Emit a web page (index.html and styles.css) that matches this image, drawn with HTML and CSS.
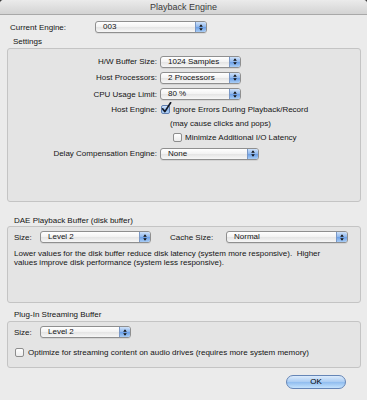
FILE: index.html
```html
<!DOCTYPE html>
<html>
<head>
<meta charset="utf-8">
<link rel="stylesheet" href="styles.css">
</head>
<body>
<div class="window">
  <div class="titlebar">Playback Engine</div>

  <div class="engine-row">
    <span class="engine-label">Current Engine:</span>
    <div class="popup w-engine"><span class="popup-text">003</span><span class="cap"><svg width="4" height="7" viewBox="0 0 4 7"><path d="M2 0.3 L3.8 2.7 H0.2 Z M2 6.7 L3.8 4.3 H0.2 Z" fill="#111"/></svg></span></div>
  </div>

  <div class="legend legend-settings">Settings</div>
  <div class="group settings">
    <div class="form">
      <div class="lbl">H/W Buffer Size:</div>
      <div class="ctl"><div class="popup w-hw"><span class="popup-text">1024 Samples</span><span class="cap"><svg width="4" height="7" viewBox="0 0 4 7"><path d="M2 0.3 L3.8 2.7 H0.2 Z M2 6.7 L3.8 4.3 H0.2 Z" fill="#111"/></svg></span></div></div>

      <div class="lbl">Host Processors:</div>
      <div class="ctl"><div class="popup w-hw"><span class="popup-text">2 Processors</span><span class="cap"><svg width="4" height="7" viewBox="0 0 4 7"><path d="M2 0.3 L3.8 2.7 H0.2 Z M2 6.7 L3.8 4.3 H0.2 Z" fill="#111"/></svg></span></div></div>

      <div class="lbl">CPU Usage Limit:</div>
      <div class="ctl"><div class="popup w-hw"><span class="popup-text">80 %</span><span class="cap"><svg width="4" height="7" viewBox="0 0 4 7"><path d="M2 0.3 L3.8 2.7 H0.2 Z M2 6.7 L3.8 4.3 H0.2 Z" fill="#111"/></svg></span></div></div>

      <div class="lbl">Host Engine:</div>
      <div class="ctl check-line host"><span class="checkbox checked"><svg width="11" height="12" viewBox="0 0 11 12"><path d="M1.6 6.8 L3.9 9.6 L9.6 0.8" fill="none" stroke="#141a26" stroke-width="1.7" stroke-linecap="round" stroke-linejoin="round"/></svg></span><span>Ignore Errors During Playback/Record</span></div>

      <div class="lbl"></div>
      <div class="ctl note">(may cause clicks and pops)</div>

      <div class="lbl"></div>
      <div class="ctl check-line minimize"><span class="checkbox"></span><span>Minimize Additional I/O Latency</span></div>

      <div class="lbl">Delay Compensation Engine:</div>
      <div class="ctl"><div class="popup w-delay"><span class="popup-text">None</span><span class="cap"><svg width="4" height="7" viewBox="0 0 4 7"><path d="M2 0.3 L3.8 2.7 H0.2 Z M2 6.7 L3.8 4.3 H0.2 Z" fill="#111"/></svg></span></div></div>
    </div>
  </div>

  <div class="legend legend-dae">DAE Playback Buffer (disk buffer)</div>
  <div class="group dae">
    <div class="row">
      <span class="size-label">Size:</span>
      <div class="popup w-level"><span class="popup-text">Level 2</span><span class="cap"><svg width="4" height="7" viewBox="0 0 4 7"><path d="M2 0.3 L3.8 2.7 H0.2 Z M2 6.7 L3.8 4.3 H0.2 Z" fill="#111"/></svg></span></div>
      <span class="cache-label">Cache Size:</span>
      <div class="popup w-cache"><span class="popup-text">Normal</span><span class="cap"><svg width="4" height="7" viewBox="0 0 4 7"><path d="M2 0.3 L3.8 2.7 H0.2 Z M2 6.7 L3.8 4.3 H0.2 Z" fill="#111"/></svg></span></div>
    </div>
    <p class="desc">Lower values for the disk buffer reduce disk latency (system more responsive).&nbsp; Higher<br>values improve disk performance (system less responsive).</p>
  </div>

  <div class="legend legend-plugin">Plug-In Streaming Buffer</div>
  <div class="group plugin">
    <div class="row">
      <span class="size-label">Size:</span>
      <div class="popup w-level2"><span class="popup-text">Level 2</span><span class="cap"><svg width="4" height="7" viewBox="0 0 4 7"><path d="M2 0.3 L3.8 2.7 H0.2 Z M2 6.7 L3.8 4.3 H0.2 Z" fill="#111"/></svg></span></div>
    </div>
    <div class="row check-line optimize"><span class="checkbox"></span><span>Optimize for streaming content on audio drives (requires more system memory)</span></div>
  </div>

  <div class="footer">
    <div class="ok-button">OK</div>
  </div>
</div>
</body>
</html>
```

FILE: styles.css
```css
* { box-sizing: border-box; margin: 0; padding: 0; }

html, body {
  width: 367px;
  height: 400px;
  overflow: hidden;
  background: #3c3c3c;
}

body {
  font-family: "Liberation Sans", Arial, sans-serif;
  font-size: 8px;
  color: #141414;
}

.window {
  width: 367px;
  height: 400px;
  background: #ebebeb;
  border-radius: 4px 4px 0 0;
  overflow: hidden;
  display: flex;
  flex-direction: column;
}

.titlebar {
  flex: none;
  height: 15px;
  background: linear-gradient(#ebebeb, #d3d3d3);
  border-bottom: 1px solid #a8a8a8;
  text-align: center;
  line-height: 14px;
  font-size: 9px;
  color: #3a3a3a;
}

.engine-row {
  flex: none;
  display: flex;
  align-items: center;
  height: 14px;
  margin-top: 5px;
  padding-left: 10px;
}

.engine-label { width: 85px; }

/* popup button */
.popup {
  flex: none;
  display: flex;
  height: 12px;
  border: 1px solid #8f8f8f;
  border-radius: 3px;
  background: linear-gradient(#ffffff, #f2f2f2 50%, #e4e4e4 51%, #f7f7f7);
  box-shadow: 0 1px 0 rgba(0, 0, 0, 0.07);
  overflow: hidden;
}

.popup-text {
  flex: 1;
  padding-left: 7px;
  line-height: 10px;
  white-space: nowrap;
}

.cap {
  flex: none;
  width: 11px;
  border-left: 1px solid #7a98c6;
  background: linear-gradient(#cfe2fa, #8db6ec 50%, #6a9ee6 51%, #a9cdf5);
  display: flex;
  align-items: center;
  justify-content: center;
}

.w-engine { width: 112px; }
.w-hw { width: 81px; }
.w-delay { width: 99px; }
.w-level { width: 111px; }
.w-cache { width: 122px; }
.w-level2 { width: 91px; }

/* group boxes */
.legend {
  flex: none;
  height: 10px;
  line-height: 10px;
  white-space: nowrap;
}

.legend-settings { margin-top: 3px; padding-left: 13px; }
.legend-dae { margin-top: 14px; padding-left: 14px; }
.legend-plugin { margin-top: 7px; padding-left: 14px; }

.group {
  flex: none;
  width: 354px;
  margin-left: 7px;
  border: 1px solid #c4c4c4;
  border-radius: 3px;
  background: #e4e4e4;
}

.settings { height: 154px; margin-top: 1px; }
.dae { height: 77px; padding-left: 6px; }
.plugin { height: 47px; margin-top: 1px; padding-left: 6px; }

.form {
  display: grid;
  grid-template-columns: 149px 1fr;
  grid-template-rows: 15px 17px 16px 14px 14px 15px 17px;
  column-gap: 3px;
  padding-top: 5px;
}

.lbl {
  text-align: right;
  white-space: nowrap;
  display: flex;
  align-items: center;
  justify-content: flex-end;
}

.ctl {
  display: flex;
  align-items: center;
  white-space: nowrap;
}

.check-line { gap: 3px; }
.host { padding-left: 1px; }
.note { padding-left: 10px; }
.minimize { padding-left: 13px; }

.checkbox {
  flex: none;
  position: relative;
  width: 9px;
  height: 9px;
  border: 1px solid #8d8d8d;
  border-radius: 2px;
  background: linear-gradient(#ffffff, #ececec);
}

.checkbox.checked {
  border-color: #5f7fb2;
  background: linear-gradient(#d4e6fb, #8eb8ef 55%, #b6d4f7);
}

.checkbox svg {
  position: absolute;
  left: -1px;
  top: -4px;
}

.row {
  display: flex;
  align-items: center;
  height: 14px;
  white-space: nowrap;
}

.dae .row { margin-top: 3px; }
.plugin .row { margin-top: 3px; }
.plugin .optimize { margin-top: 6px; padding-left: 1px; gap: 4px; }

.size-label { width: 26px; }
.cache-label { margin-left: 19px; width: 56px; }

.desc {
  margin-top: 5px;
  line-height: 9px;
  white-space: nowrap;
}

.footer {
  flex: none;
  display: flex;
  justify-content: flex-end;
  padding-right: 21px;
  margin-top: 7px;
}

.ok-button {
  width: 60px;
  height: 14px;
  border: 1px solid #6585b6;
  border-radius: 7px;
  background: linear-gradient(#dcebfc, #a9cbf2 50%, #8fbcef 51%, #c4e2fd);
  text-align: center;
  line-height: 12px;
  font-size: 8px;
  color: #000;
}
```
